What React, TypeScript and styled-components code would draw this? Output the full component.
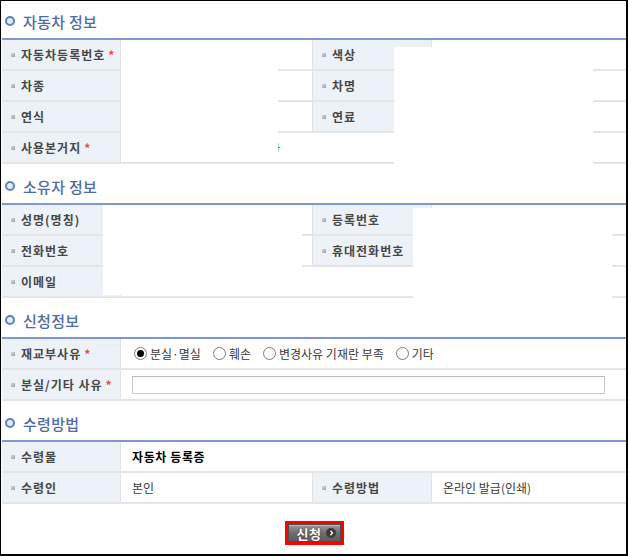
import React from "react";
import styled, { createGlobalStyle } from "styled-components";

const Global = createGlobalStyle`
  html, body { margin: 0; padding: 0; background: #fff; }
  body { font-family: "Noto Sans CJK KR", "Noto Sans", sans-serif; }
  * { box-sizing: border-box; }
`;

const Page = styled.div`
  position: relative;
  width: 628px;
  height: 556px;
  border-style: solid;
  border-color: #000;
  border-width: 1px 2px 2px 1px;
  padding-left: 1px;
  background: #fff;
  overflow: hidden;
`;

const Section = styled.section`
  & + & { margin-top: 2px; }
`;

const Heading = styled.h2`
  margin: 0;
  height: 37px;
  display: flex;
  align-items: center;
  gap: 8px;
  padding: 3px 0 0 3px;
  font-size: 15px;
  font-weight: 500;
  color: #4e6ba6;
  letter-spacing: 0.3px;
`;

const Ring = styled.span`
  width: 10px;
  height: 10px;
  border-radius: 50%;
  border: 2.5px solid #5d7fc2;
  background: #e4ebf7;
  flex: none;
`;

const Table = styled.div`
  border-top: 2px solid #7c9ad0;
`;

const Row = styled.div`
  display: grid;
  grid-template-columns: 119px 192px 119px 1fr;
  height: 31px;
  border-bottom: 2px solid #e5e5e5;
`;

const Label = styled.div`
  display: flex;
  align-items: center;
  padding-left: 9px;
  background: #edf1f8;
  border-right: 1px solid #e2e2e2;
  font-size: 12px;
  font-weight: 700;
  color: #474747;
  letter-spacing: 1px;
  white-space: nowrap;
`;

const Bullet = styled.span`
  width: 4px;
  height: 4px;
  margin-right: 6px;
  background: linear-gradient(135deg, #d8d8d8, #a0a0a0);
  flex: none;
`;

const Star = styled.span`
  margin-left: 3px;
  color: #e84a4a;
  font-weight: 700;
  font-size: 12px;
`;

const Value = styled.div<{ $span?: number; $bold?: boolean; $divider?: boolean }>`
  grid-column: span ${(p) => p.$span ?? 1};
  display: flex;
  align-items: center;
  padding-left: 11px;
  font-size: 12px;
  color: ${(p) => (p.$bold ? "#000" : "#3a3a3a")};
  font-weight: ${(p) => (p.$bold ? 700 : 400)};
  letter-spacing: ${(p) => (p.$bold ? "0.6px" : "0")};
  border-right: ${(p) => (p.$divider ? "1px solid #e2e2e2" : "none")};
  white-space: nowrap;
`;

const Fragment = styled.span`
  margin-left: 142px;
  font-size: 9px;
  color: #666;
`;

const Radios = styled.div`
  display: flex;
  align-items: center;
  gap: 12px;
  margin-left: 2px;
`;

const RadioItem = styled.label`
  display: inline-flex;
  align-items: center;
  gap: 3px;
  font-size: 12px;
  color: #3a3a3a;
`;

const RadioInput = styled.input`
  appearance: none;
  margin: 0;
  width: 13px;
  height: 13px;
  border-radius: 50%;
  border: 1px solid #7a7a7a;
  background: #fff;
  display: grid;
  place-content: center;
  &::before {
    content: "";
    width: 7px;
    height: 7px;
    border-radius: 50%;
    background: #000;
    transform: scale(0);
  }
  &:checked::before { transform: scale(1); }
`;

const TextInput = styled.input`
  width: 473px;
  height: 18px;
  margin: 0;
  border: 1px solid #cbcbcb;
  border-top-color: #b8b8b8;
  font-size: 12px;
  padding: 0 3px;
`;

const ButtonBar = styled.div`
  display: flex;
  justify-content: center;
  margin-top: 17px;
`;

const Outline = styled.div`
  border: 3px solid #ff0000;
`;

const Submit = styled.button`
  display: flex;
  align-items: center;
  gap: 5px;
  width: 53px;
  height: 18px;
  margin: 0;
  padding: 0 0 0 8px;
  border: 1px solid #4d4d4d;
  background: linear-gradient(#9a9a9a, #6d6d6d 50%, #5d5d5d);
  box-shadow: inset 0 1px 0 rgba(255,255,255,0.35);
  color: #fff;
  font-family: inherit;
  font-size: 13px;
  font-weight: 700;
  letter-spacing: 0.5px;
  text-shadow: 0 0 2px #333;
  cursor: pointer;
`;

const Arrow = styled.span`
  width: 10px;
  height: 10px;
  border-radius: 50%;
  background: #3a3a3a;
  display: grid;
  place-content: center;
`;

const Redact = styled.div<{ $x: number; $y: number; $w: number; $h: number }>`
  position: absolute;
  left: ${(p) => p.$x}px;
  top: ${(p) => p.$y}px;
  width: ${(p) => p.$w}px;
  height: ${(p) => p.$h}px;
  background: #fff;
`;

const L = ({ children, req }: { children: React.ReactNode; req?: boolean }) => (
  <Label>
    <Bullet />
    {children}
    {req && <Star>*</Star>}
  </Label>
);

export default function App() {
  return (
    <>
      <Global />
      <Page>
        <Section>
          <Heading><Ring />자동차 정보</Heading>
          <Table>
            <Row>
              <L req>자동차등록번호</L>
              <Value $divider />
              <L>색상</L>
              <Value />
            </Row>
            <Row>
              <L>차종</L>
              <Value $divider />
              <L>차명</L>
              <Value />
            </Row>
            <Row>
              <L>연식</L>
              <Value $divider />
              <L>연료</L>
              <Value />
            </Row>
            <Row>
              <L req>사용본거지</L>
              <Value $span={3}><Fragment>ㅏ</Fragment></Value>
            </Row>
          </Table>
        </Section>

        <Section>
          <Heading><Ring />소유자 정보</Heading>
          <Table>
            <Row>
              <L>성명(명칭)</L>
              <Value $divider />
              <L>등록번호</L>
              <Value />
            </Row>
            <Row>
              <L>전화번호</L>
              <Value $divider />
              <L>휴대전화번호</L>
              <Value />
            </Row>
            <Row>
              <L>이메일</L>
              <Value $span={3} />
            </Row>
          </Table>
        </Section>

        <Section>
          <Heading><Ring />신청정보</Heading>
          <Table>
            <Row>
              <L req>재교부사유</L>
              <Value $span={3}>
                <Radios>
                  <RadioItem><RadioInput type="radio" name="r" defaultChecked />분실·멸실</RadioItem>
                  <RadioItem><RadioInput type="radio" name="r" />훼손</RadioItem>
                  <RadioItem><RadioInput type="radio" name="r" />변경사유 기재란 부족</RadioItem>
                  <RadioItem><RadioInput type="radio" name="r" />기타</RadioItem>
                </Radios>
              </Value>
            </Row>
            <Row>
              <L req>분실/기타 사유</L>
              <Value $span={3}>
                <TextInput type="text" />
              </Value>
            </Row>
          </Table>
        </Section>

        <Section>
          <Heading><Ring />수령방법</Heading>
          <Table>
            <Row>
              <L>수령물</L>
              <Value $span={3} $bold>자동차 등록증</Value>
            </Row>
            <Row>
              <L>수령인</L>
              <Value $divider>본인</Value>
              <L>수령방법</L>
              <Value>온라인 발급(인쇄)</Value>
            </Row>
          </Table>
        </Section>

        <ButtonBar>
          <Outline>
            <Submit type="button">
              신청
              <Arrow>
                <svg width="5" height="6" viewBox="0 0 5 6">
                  <path d="M1.5 0.8 L3.5 3 L1.5 5.2" stroke="#fff" strokeWidth="1.3" fill="none" />
                </svg>
              </Arrow>
            </Submit>
          </Outline>
        </ButtonBar>

        <Redact $x={120} $y={39} $w={157} $h={121} />
        <Redact $x={393} $y={46} $w={199} $h={117} />
        <Redact $x={102} $y={204} $w={199} $h={90} />
        <Redact $x={412} $y={207} $w={199} $h={91} />
      </Page>
    </>
  );
}
